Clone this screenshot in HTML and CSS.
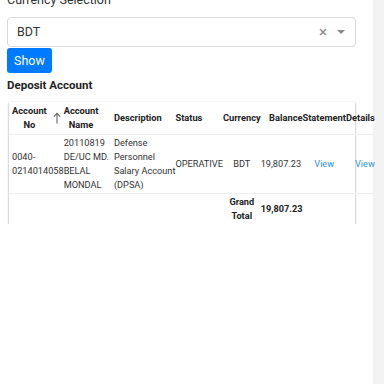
FILE: index.html
```html
<!DOCTYPE html>
<html lang="en">
<head>
<meta charset="UTF-8" />
<title>Deposit Account</title>
<link rel="stylesheet" href="styles.css">
</head>
<body>

<div class="page">
  <label class="field-label">Currency Selection</label>

  <div class="select-box">
    <span class="select-value">BDT</span>
    <span class="select-clear">&times;</span>
    <span class="select-arrow"></span>
  </div>

  <button type="button" class="btn-show">Show</button>

  <h4 class="section-title">Deposit Account</h4>

  <div class="card">
    <table class="accounts">
      <thead>
        <tr>
          <th class="col-no"><span class="stack">Account<br>No</span></th>
          <th class="col-sort">
            <svg class="sort-arrow" width="8" height="12" viewBox="0 0 8 12">
              <path d="M4 11.5V1.5M0.8 4.6L4 1.3L7.2 4.6" fill="none" stroke="#666" stroke-width="1.1"/>
            </svg>
          </th>
          <th><span class="stack">Account<br>Name</span></th>
          <th class="col-desc">Description</th>
          <th>Status</th>
          <th>Currency</th>
          <th class="col-bal">Balance</th>
          <th>Statement</th>
          <th>Details</th>
        </tr>
      </thead>
      <tbody>
        <tr>
          <td colspan="2">0040-<br>0214014058</td>
          <td>20110819<br>DE/UC MD.<br>BELAL<br>MONDAL</td>
          <td class="col-desc">Defense<br>Personnel<br>Salary Account<br>(DPSA)</td>
          <td>OPERATIVE</td>
          <td class="center">BDT</td>
          <td class="col-bal">19,807.23</td>
          <td class="center"><a href="#">View</a></td>
          <td class="right"><a href="#">View</a></td>
        </tr>
      </tbody>
      <tfoot>
        <tr>
          <td colspan="5"></td>
          <td class="center bold">Grand<br>Total</td>
          <td class="col-bal bold">19,807.23</td>
          <td></td>
          <td></td>
        </tr>
      </tfoot>
    </table>
  </div>
</div>

</body>
</html>
```

FILE: styles.css
```css
html {
  background: linear-gradient(to right, #ffffff 373px, #f3f3f3 373px);
}

body {
  margin: 0;
  font-family: Roboto, "Noto Sans", sans-serif;
  color: #212529;
}

.page {
  padding: 0 28px 0 7px;
  margin-top: -9px;
}

.field-label {
  display: block;
  font-size: 12.5px;
  line-height: 17px;
  color: #333;
  margin-bottom: 9px;
}

.select-box {
  display: flex;
  align-items: center;
  height: 28px;
  border: 1px solid #d9dcdf;
  border-radius: 4px;
  padding: 0 10px 0 9px;
  background: #fff;
}

.select-value {
  flex: 1;
  font-size: 12.5px;
  color: #333;
  margin-top: -1px;
}

.select-clear {
  font-size: 15px;
  color: #8a8a8a;
  margin-right: 10px;
}

.select-arrow {
  width: 0;
  height: 0;
  border-left: 4px solid transparent;
  border-right: 4px solid transparent;
  border-top: 4px solid #888;
}

.btn-show {
  display: block;
  margin-top: 1px;
  height: 25px;
  padding: 0 7px;
  font-family: inherit;
  font-size: 12.5px;
  color: #fff;
  background-color: #007bff;
  border: none;
  border-radius: 3px;
}

.section-title {
  margin: 5px 0 10px;
  font-size: 11.5px;
  font-weight: bold;
  color: #222;
}

.card {
  margin-left: 2px;
  width: 346px;
  background: #fff;
  box-shadow: 0 1px 2px rgba(0, 0, 0, 0.45);
}

.accounts {
  border-collapse: collapse;
  font-size: 9.2px;
  line-height: 14px;
  color: #333;
  white-space: nowrap;
}

.accounts th {
  font-size: 9.3px;
  font-weight: bold;
  text-align: left;
  vertical-align: middle;
  padding: 2px 0;
  color: #222;
}

.stack {
  display: inline-block;
  text-align: center;
}

.accounts th.col-no {
  padding-left: 3px;
}

.accounts th.col-sort {
  padding: 0 2px 0 6px;
}

.sort-arrow {
  display: block;
  margin-top: -1px;
}

.accounts td {
  text-align: left;
  vertical-align: middle;
  padding: 1px 0;
  border-top: 1px solid #eceeef;
}

.accounts td:first-child {
  padding-left: 3px;
}

.accounts .col-desc {
  padding-left: 5px;
}

.accounts th.col-bal {
  text-align: right;
}

.accounts td.center {
  text-align: center;
}

.accounts td.right {
  text-align: right;
}

.accounts td.bold {
  font-weight: bold;
  color: #222;
}

.accounts a {
  color: #2f8fd8;
  text-decoration: none;
}
```
